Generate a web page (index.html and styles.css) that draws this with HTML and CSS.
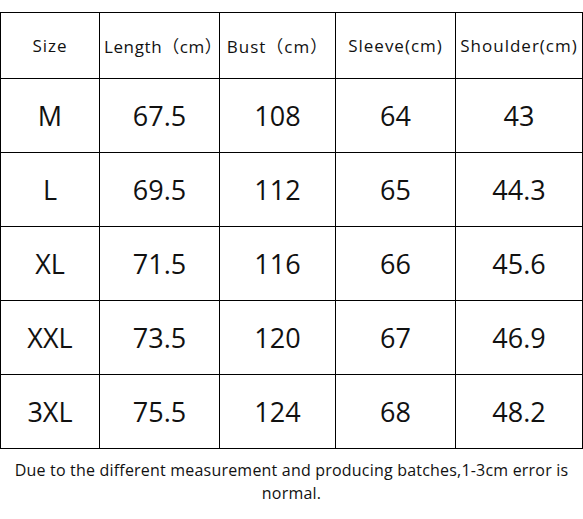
FILE: index.html
```html
<!DOCTYPE html>
<html lang="en">
<head>
  <meta charset="UTF-8">
  <meta name="viewport" content="width=device-width, initial-scale=1.0">
  <title>Size Chart</title>
  <link rel="stylesheet" href="styles.css">
</head>
<body>

  <div id="chart">
    <table class="size-table">
      <colgroup>
        <col class="col-size">
        <col class="col-length">
        <col class="col-bust">
        <col class="col-sleeve">
        <col class="col-shoulder">
      </colgroup>
      <tr class="head-row">
        <th>Size</th>
        <th class="left">Length（cm）</th>
        <th>Bust（cm）</th>
        <th>Sleeve(cm)</th>
        <th>Shoulder(cm)</th>
      </tr>
      <tr>
        <td>M</td><td>67.5</td><td>108</td><td>64</td><td>43</td>
      </tr>
      <tr>
        <td>L</td><td>69.5</td><td>112</td><td>65</td><td>44.3</td>
      </tr>
      <tr>
        <td>XL</td><td>71.5</td><td>116</td><td>66</td><td>45.6</td>
      </tr>
      <tr>
        <td>XXL</td><td>73.5</td><td>120</td><td>67</td><td>46.9</td>
      </tr>
      <tr>
        <td>3XL</td><td>75.5</td><td>124</td><td>68</td><td>48.2</td>
      </tr>
    </table>

    <p class="note">Due to the different measurement and producing batches,1-3cm error is normal.</p>
  </div>

</body>
</html>
```

FILE: styles.css
```css
body {
  margin: 0;
  font-family: "Open Sans", "Noto Sans CJK SC", sans-serif;
  background-color: #fff;
  color: #111;
}

#chart {
  width: 583px;
  padding-top: 12px;
}

.size-table {
  width: 582px;
  border-collapse: collapse;
  table-layout: fixed;
}

.col-size { width: 99px; }
.col-length { width: 120px; }
.col-bust { width: 116px; }
.col-sleeve { width: 120px; }
.col-shoulder { width: 127px; }

.size-table th,
.size-table td {
  border: 1px solid #000;
  padding: 0;
  text-align: center;
  white-space: nowrap;
}

.size-table th {
  height: 65px;
  font-size: 17px;
  font-weight: normal;
  letter-spacing: 1px;
}

.size-table th.left {
  text-align: left;
  padding-left: 4px;
  letter-spacing: 0.6px;
}

.size-table td {
  height: 73px;
  font-size: 27px;
}

.note {
  margin: 10px 0 0;
  padding: 0 8px;
  font-size: 16px;
  line-height: 23px;
  letter-spacing: 0.2px;
  text-align: center;
}
```
